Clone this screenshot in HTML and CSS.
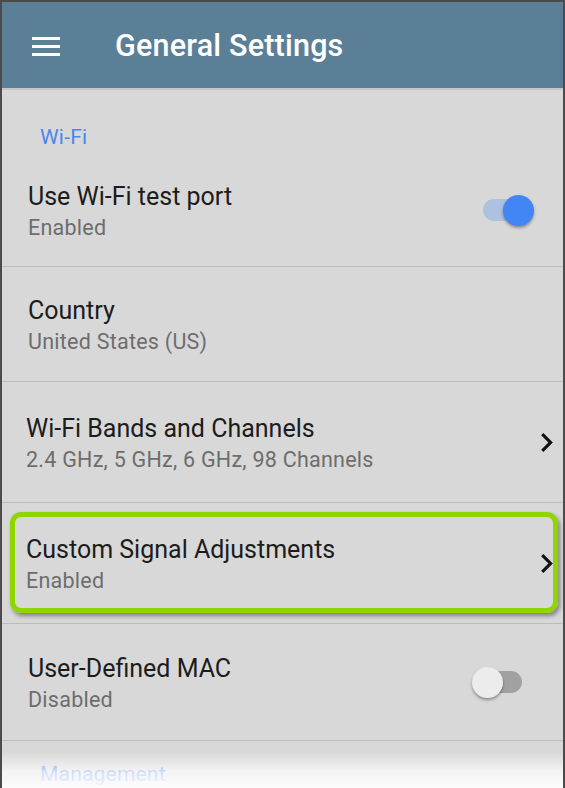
FILE: index.html
```html
<!DOCTYPE html>
<html lang="en">
<head>
<meta charset="utf-8">
<title>General Settings</title>
<link rel="stylesheet" href="styles.css">
</head>
<body>
<div class="frame">
  <header class="appbar">
    <svg class="menu" width="28" height="19" viewBox="0 0 28 19" aria-hidden="true">
      <rect x="0" y="0" width="28" height="3" fill="#ffffff"/>
      <rect x="0" y="8" width="28" height="3" fill="#ffffff"/>
      <rect x="0" y="16" width="28" height="3" fill="#ffffff"/>
    </svg>
    <h1 class="title">General Settings</h1>
  </header>
  <main class="list">
    <div class="section">Wi-Fi</div>
    <div class="row row-1">
      <div class="text">
        <div class="primary">Use Wi-Fi test port</div>
        <div class="secondary">Enabled</div>
      </div>
      <div class="switch switch-on"><span class="track"></span><span class="thumb"></span></div>
    </div>
    <div class="row row-2">
      <div class="text">
        <div class="primary">Country</div>
        <div class="secondary">United States (US)</div>
      </div>
    </div>
    <div class="row row-3 row-nav">
      <div class="text">
        <div class="primary">Wi-Fi Bands and Channels</div>
        <div class="secondary">2.4 GHz, 5 GHz, 6 GHz, 98 Channels</div>
      </div>
      <svg class="chevron" width="12" height="19" viewBox="8.5 6 7.6 12" aria-hidden="true">
        <path d="M10 6L8.59 7.41 13.17 12l-4.58 4.59L10 18l6-6z" fill="#111111"/>
      </svg>
    </div>
    <div class="row row-4 row-nav">
      <div class="text">
        <div class="primary">Custom Signal Adjustments</div>
        <div class="secondary">Enabled</div>
      </div>
      <svg class="chevron" width="12" height="19" viewBox="8.5 6 7.6 12" aria-hidden="true">
        <path d="M10 6L8.59 7.41 13.17 12l-4.58 4.59L10 18l6-6z" fill="#111111"/>
      </svg>
      <div class="highlight"></div>
    </div>
    <div class="row row-5">
      <div class="text">
        <div class="primary">User-Defined MAC</div>
        <div class="secondary">Disabled</div>
      </div>
      <div class="switch switch-off"><span class="track"></span><span class="thumb"></span></div>
    </div>
    <div class="section section-last">Management</div>
  </main>
  <div class="fade"></div>
</div>
</body>
</html>
```

FILE: styles.css
```css
* {
  box-sizing: border-box;
}

html, body {
  margin: 0;
  padding: 0;
  background: #4d4d4d;
}

body {
  font-family: Roboto, "Noto Sans", "Liberation Sans", sans-serif;
}

.frame {
  position: relative;
  width: 565px;
  height: 788px;
  overflow: hidden;
  background: #d8d8d8;
  border: 2px solid #4b4b4b;
  border-bottom: none;
}

.appbar {
  display: flex;
  align-items: center;
  height: 88px;
  padding-left: 30px;
  padding-top: 2px;
  background: #5b7f96;
  border-bottom: 2px solid #c7c7c7;
}

.menu {
  display: block;
  flex: none;
}

.title {
  margin: 0 0 0 55px;
  font-size: 30.5px;
  line-height: 36px;
  font-weight: 500;
  color: #ffffff;
  letter-spacing: 0.2px;
}

.list {
  display: flex;
  flex-direction: column;
}

.section {
  display: flex;
  align-items: flex-end;
  height: 64px;
  padding: 0 0 4px 38px;
  font-size: 21px;
  line-height: 26px;
  color: #4a87f0;
  letter-spacing: 0.2px;
}

.section-last {
  flex: none;
  height: 50px;
}

.row {
  position: relative;
  display: flex;
  align-items: center;
  padding-left: 26px;
  border-bottom: 1px solid #bcbcbc;
  flex: none;
}

.row-1 { height: 113px; }
.row-2 { height: 115px; }
.row-3 { height: 121px; }
.row-4 { height: 121px; }
.row-5 { height: 117px; }

.row-nav {
  padding-left: 24px;
}

.text {
  display: flex;
  flex-direction: column;
  padding-top: 4px;
}

.primary {
  font-size: 25px;
  line-height: 31px;
  color: #1c1c1c;
}

.secondary {
  font-size: 21.5px;
  line-height: 32px;
  color: #6d6d6d;
  letter-spacing: 0.25px;
}

.switch {
  position: relative;
  height: 31px;
  margin-left: auto;
  flex: none;
}

.switch .track {
  position: absolute;
  top: 4.5px;
  height: 22px;
  border-radius: 11px;
}

.switch .thumb {
  position: absolute;
  top: 0;
  width: 31px;
  height: 31px;
  border-radius: 50%;
  box-shadow: 0 2px 3px rgba(0, 0, 0, 0.35);
}

.switch-on {
  width: 51px;
  margin-right: 29px;
}

.switch-on .track {
  left: 0;
  width: 46px;
  background: #adc2e1;
}

.switch-on .thumb {
  right: 0;
  background: #4285f4;
}

.switch-off {
  width: 50px;
  margin-right: 41px;
}

.switch-off .track {
  left: 7px;
  right: 0;
  background: #a1a1a1;
}

.switch-off .thumb {
  left: 0;
  background: #ececec;
}

.chevron {
  display: block;
  margin-left: auto;
  margin-right: 10px;
  flex: none;
}

.highlight {
  position: absolute;
  top: 9px;
  left: 8px;
  right: 5px;
  bottom: 10px;
  border: 5px solid #8fd500;
  border-radius: 11px;
  box-shadow: 2px 3px 4px rgba(0, 0, 0, 0.4);
  pointer-events: none;
}

.fade {
  position: absolute;
  left: -2px;
  right: -2px;
  bottom: 0;
  height: 36px;
  background: linear-gradient(to bottom, rgba(255, 255, 255, 0) 0%, rgba(255, 255, 255, 0.72) 55%, rgba(255, 255, 255, 0.93) 100%);
}
```
